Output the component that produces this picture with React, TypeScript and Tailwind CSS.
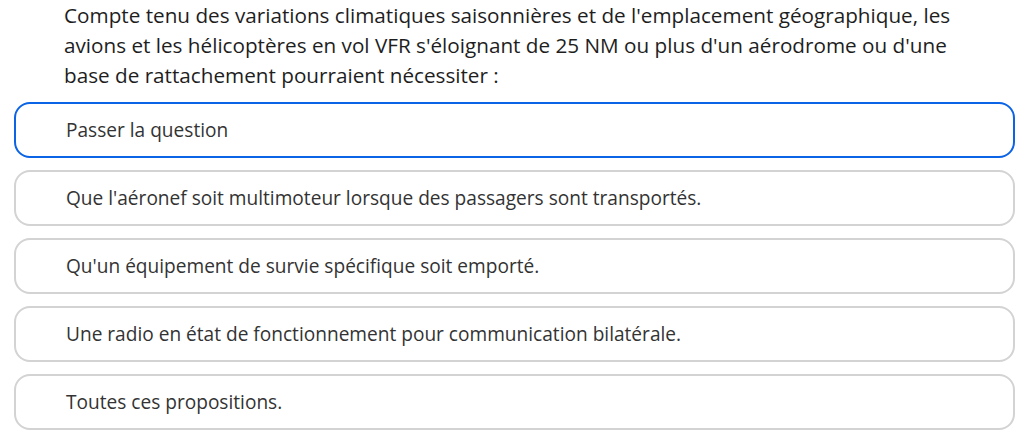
import React from "react";

const options = [
  "Passer la question",
  "Que l'aéronef soit multimoteur lorsque des passagers sont transportés.",
  "Qu'un équipement de survie spécifique soit emporté.",
  "Une radio en état de fonctionnement pour communication bilatérale.",
  "Toutes ces propositions.",
];

export default function App() {
  return (
    <div className="w-[1022px] h-[439px] bg-white overflow-hidden" style={{ fontFamily: '"Open Sans", sans-serif' }}>
      <p className="pl-[64px] w-[990px] text-[20.7px] leading-[30px] text-[#1e1e1e]">
        Compte tenu des variations climatiques saisonnières et de l'emplacement géographique, les avions et les hélicoptères en vol VFR s'éloignant de 25 NM ou plus d'un aérodrome ou d'une base de rattachement pourraient nécessiter :
      </p>
      <div className="mt-[12px] ml-[14px] w-[1001px] flex flex-col gap-[12px]">
        {options.map((o, i) => (
          <div
            key={i}
            className={
              i === 0
                ? "h-[56px] rounded-[16px] border-2 border-[#0b63e5] flex items-center pl-[50px] text-[19.1px] text-[#333333]"
                : "h-[56px] rounded-[16px] border-2 border-[#d3d3d3] flex items-center pl-[50px] text-[19.1px] text-[#333333]"
            }
          >
            {o}
          </div>
        ))}
      </div>
    </div>
  );
}
